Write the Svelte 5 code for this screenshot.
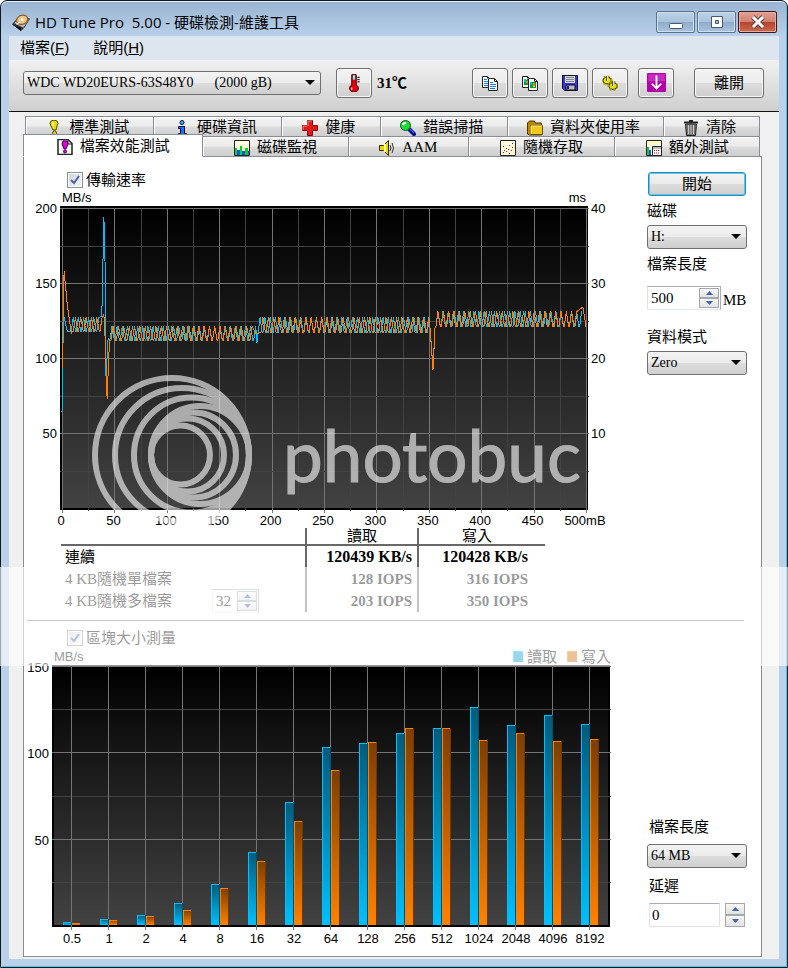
<script lang="ts">
	type Tab = { icon: string; name: string; size: number; active?: boolean };

	const backTabs: Tab[] = [
		{ icon: "bulb", name: "標準測試", size: 129 },
		{ icon: "info", name: "硬碟資訊", size: 128 },
		{ icon: "cross", name: "健康", size: 98 },
		{ icon: "search", name: "錯誤掃描", size: 128 },
		{ icon: "folder", name: "資料夾使用率", size: 158 },
		{ icon: "trash", name: "清除", size: 95 },
	];
	const frontTabs: Tab[] = [
		{ icon: "note", name: "檔案效能測試", size: 180, active: true },
		{ icon: "bars", name: "磁碟監視", size: 146 },
		{ icon: "speaker", name: "AAM", size: 120 },
		{ icon: "scatter", name: "隨機存取", size: 147 },
		{ icon: "extra", name: "額外測試", size: 145 },
	];
	const tools = [
		{ icon: "copy", name: "Copy text" },
		{ icon: "copyImage", name: "Copy image" },
		{ icon: "save", name: "Save" },
		{ icon: "gears", name: "Options" },
	];

	const results = [
		{ read: "128 IOPS", write: "316 IOPS", name: "4 KB隨機單檔案" },
		{ read: "203 IOPS", write: "350 IOPS", name: "4 KB隨機多檔案" },
	];

	const blocks = [
		{ size: "0.5", read: 1.7, write: 1.2 },
		{ size: "1", read: 3.5, write: 2.9 },
		{ size: "2", read: 5.8, write: 5.2 },
		{ size: "4", read: 12.7, write: 8.7 },
		{ size: "8", read: 23.7, write: 21.4 },
		{ size: "16", read: 42.3, write: 37.1 },
		{ size: "32", read: 71.2, write: 60.2 },
		{ size: "64", read: 103.1, write: 89.8 },
		{ size: "128", read: 105.4, write: 106 },
		{ size: "256", read: 111.2, write: 114.1 },
		{ size: "512", read: 114.1, write: 114.1 },
		{ size: "1024", read: 126.3, write: 107.1 },
		{ size: "2048", read: 115.8, write: 111.2 },
		{ size: "4096", read: 121.6, write: 106.6 },
		{ size: "8192", read: 116.4, write: 107.7 },
	];

	// transfer chart: 500 MB over 524 units, 200 MB/s over 300 units
	const px = (mb: number) => 38 + mb * 1.048;
	const py = (speed: number) => 302 - speed * 1.5;
	// block chart: 150 MB/s over 259 units
	const by = (speed: number) => Math.round(260 - (speed * 259) / 150);

	// saw wave between two speeds
	function wave(from: number, to: number, low: number, high: number, period: number) {
		const points: number[][] = [];
		for (let x = from; x < to; x += period) {
			points.push([x, low], [x + period * 0.15, low], [x + period * 0.55, high]);
		}
		return points;
	}

	const line = (points: number[][]) =>
		points.map(([x, y]) => `${px(x).toFixed(1)},${py(y).toFixed(1)}`).join(" ");

	const readLine = line([
		[0, 64], [1, 110], [2, 127], [5, 118],
		...wave(8, 36, 118, 127, 4.9),
		[38, 128], [40, 194], [41, 165], [42, 88], [44, 113],
		...wave(45, 184, 112, 121, 4.9),
		[186, 110], [189, 127],
		...wave(191, 348, 117, 127, 4.9),
		[351, 122], [354, 93],
		...wave(356, 496, 121, 131, 4.9),
	]);
	const writeLine = line([
		[0, 93], [2, 158], [5, 136], [9, 116],
		...wave(10, 36, 118, 127, 5.1),
		[40, 129], [41, 115], [43, 73], [45, 107],
		...wave(46, 182, 112, 121, 5.1),
		[185, 116],
		...wave(189, 348, 117, 127, 5.1),
		[351, 122], [354, 92],
		...wave(356, 491, 121, 131, 5.1),
		[497, 134], [500, 121],
	]);

	// left edge, right edge of every ring in the watermark
	const rings = [
		[68, 228], [88, 228], [107, 228], [124, 228], [124, 215], [124, 203], [124, 189],
	];
</script>

{#snippet icon(name: string, size: number = 16)}
	<svg class="icon" width={size} height={size} viewBox="0 0 16 16" aria-hidden="true">
		{#if name === "drive"}
			<path d="M0 10 7 2l9 3-5 8-3 3z" fill="#333" />
			<path d="M2 9 7 3l8 3-5 7z" fill="#b9b5ac" />
			<ellipse cx="9" cy="6" rx="5" ry="4" fill="#e8c68c" stroke="#8a5c20" transform="rotate(-20 9 6)" />
			<circle cx="9" cy="6" r="1.2" fill="#fff" />
			<path d="m0 10 8 3v3z" fill="#111" />
			<path d="m4 10 3-2" stroke="#eee" />
		{:else if name === "thermo"}
			<path d="M6 1q2-2 4 0v9q2 1 2 3-1 3-4 3t-4-3q0-2 2-3z" fill="#e00010" stroke="#600" />
			<path d="M7 1h2v4H7z" fill="#5ff" />
			<path d="M6 12v2" stroke="#fff" />
			<path d="M11 3h2M11 5h2M11 7h2" stroke="#222" />
		{:else if name === "copy" || name === "copyImage"}
			<path d="M.5 1.500h5l3 3v8h-8z" fill="#fff" stroke="#222" />
			<path d="M6.500 3.500h6l3 3v9h-9z" fill="#fff" stroke="#222" />
			<path d="M12.500 3.500v3h3M5.500 1.500v2" fill="none" stroke="#222" />
			{#if name === "copy"}
				<path d="M2 4.500h3M2 6.500h4M2 8.500h4M2 10.500h4M8 7.500h3M8 9.500h6M8 11.500h6M8 13.500h5" stroke="#1778e0" />
			{:else}
				<path d="M2 4h4v6H2zM8 7h6v6H8z" fill="#0a9c30" />
				<path d="M2 4h2v3H2zM8 7h2v3H8z" fill="#00b8e0" />
				<path d="M4 6h2v2H4zM11 8h2v3h-2z" fill="#f80" />
				<path d="M4 4h1v1H4zM11 11h2v1h-2z" fill="#ff0" />
			{/if}
		{:else if name === "save"}
			<path d="M.5.500h15v15h-13l-2-2z" fill="#3434e8" stroke="#111" />
			<path d="M3 1h10v7H3z" fill="#d8d8d8" />
			<path d="M4 2.500h8M4 4.500h8M4 6.500h8" stroke="#888" />
			<path d="M4 10h9v5H4z" fill="#bbb" stroke="#111" />
			<path d="M5 11h2v3H5z" fill="#1818a0" />
		{:else if name === "gears"}
			<ellipse cx="5" cy="5.500" rx="4" ry="3.500" fill="#e8e000" stroke="#222" />
			<ellipse cx="5" cy="5.500" rx="4.500" ry="4" fill="none" stroke="#a89c00" stroke-width="2" stroke-dasharray="2 2" />
			<ellipse cx="11" cy="11" rx="4" ry="3.500" fill="#e8e000" stroke="#222" />
			<ellipse cx="11" cy="11" rx="4.500" ry="4" fill="none" stroke="#a89c00" stroke-width="2" stroke-dasharray="2 2" />
			<path d="M5 1v5M11 6v5" stroke="#555" stroke-width="2" />
			<path d="M5.500 1v5M11.500 6v5" stroke="#ddd" />
		{:else if name === "download"}
			<rect width="16" height="16" rx="1" fill="#b000a8" />
			<path d="M1 1h14v6H1z" fill="#d848d0" opacity=".6" />
			<path d="M8 2v11M4 9l4 4 4-4" fill="none" stroke="#fff" stroke-width="1.600" />
		{:else if name === "bulb"}
			<path d="M5 1q3-2 6 0 2 3 0 5l-1 4H7L5 6Q3 3 5 1z" fill="#e8e000" stroke="#554c00" />
			<path d="M7 2v4" stroke="#fff" />
			<circle cx="8.500" cy="13" r="2" fill="#e8e000" stroke="#554c00" />
		{:else if name === "info"}
			<circle cx="8" cy="2.500" r="2" fill="#28c0ff" stroke="#003" />
			<path d="M4.500 6.500h6v7h2v2h-8v-2h2v-5h-2z" fill="#1078ff" stroke="#003" />
		{:else if name === "cross"}
			<path d="M5.500.500h5v5h5v5h-5v5h-5v-5h-5v-5h5z" fill="#e01818" stroke="#800" />
			<path d="M6 6V1h4M1 10V6h4" fill="none" stroke="#ff8a80" />
		{:else if name === "search"}
			<path d="m9 9 5 5" stroke="#001080" stroke-width="4" stroke-linecap="round" />
			<path d="m10 9 4 4" stroke="#2858ff" stroke-width="1.500" />
			<circle cx="5.500" cy="5.500" r="5" fill="#20d838" stroke="#066018" />
			<path d="M3 5q0-2 3-2" fill="none" stroke="#fff" stroke-width="2" />
		{:else if name === "folder"}
			<path d="M.5 14V3l2-2h5l1 2h6v12h-12z" fill="#b88800" stroke="#4a3600" />
			<path d="M3.500 5.500h12v9h-12z" fill="#f0c820" stroke="#6a4e00" />
			<path d="M4 6h11M4 6v8" stroke="#fff090" />
		{:else if name === "trash"}
			<path d="M1 2.500h14M6 1h4" stroke="#222" stroke-width="2" />
			<path d="M2.500 4h11l-1 11.500h-9z" fill="#707070" stroke="#222" />
			<path d="M5.500 5v9M8 5v9M10.500 5v9" stroke="#ccc" />
		{:else if name === "note"}
			<path d="M1 .500h10l4 4v11H1z" fill="#fff" stroke="#222" stroke-width="1.500" />
			<path d="M11 1v4h4" fill="none" stroke="#222" />
			<path d="M6 2h4l1 3-2 5H7L5 5z" fill="#e000e0" stroke="#400040" />
			<circle cx="8" cy="12.500" r="1.500" fill="#e000e0" stroke="#400040" />
		{:else if name === "bars"}
			<path d="M.5.500h15v15H.500z" fill="#fffbe0" stroke="#222" />
			<path d="M1 8h2v7H1zM6 6h2v9H6zM11 8h3v7h-3z" fill="#00d820" />
			<path d="M3 10h3v5H3zM8 11h3v4H8zM14 11h1v4h-1z" fill="#2048ff" />
		{:else if name === "speaker"}
			<path d="M.5 5.500h4l5-5v15l-5-5h-4z" fill="#e8d800" stroke="#332c00" />
			<path d="M6 4v8" stroke="#fff8a0" stroke-width="2" />
			<path d="M11 5q2 3 0 6M13 3q3 5 0 10" fill="none" stroke="#333" />
		{:else if name === "scatter"}
			<path d="M.5.500h15v15H.500z" fill="#fffbd8" stroke="#222" />
			<path d="M3 6h1v1H3zM6 8h1v1H6zM9 5h1v1H9zM12 3h1v1h-1zM4 10h1v1H4z" fill="#22f" />
			<path d="M3 12h1v1H3zM6 11h1v1H6zM8 9h1v1H8zM11 10h1v1h-1zM12 7h1v1h-1zM9 13h1v1H9z" fill="#e00" />
		{:else if name === "extra"}
			<path d="M.5.500h15v15H.500z" fill="#fff" stroke="#222" />
			<path d="M1 1h14v4H1z" fill="#fff8c0" />
			<path d="M1 7h2v8H1z" fill="#00d820" /><path d="M3 10h2v5H3z" fill="#2048ff" />
			<path d="M6.500 6.500h9v9h-9z" fill="#fff" stroke="#222" />
			<path d="M7 7h8v2H7z" fill="#bbb" />
			<path d="M8 10.500h6M8 13h6" stroke="#e00" stroke-dasharray="1 1" />
		{/if}
	</svg>
{/snippet}

{#snippet tab(t: Tab)}
	<button class="tab" class:active={t.active} role="tab" aria-selected={!!t.active} style:flex-grow={t.size}>
		{@render icon(t.icon)}
		<span>{t.name}</span>
	</button>
{/snippet}

{#snippet arrows()}
	<span class="arrows">
		<button aria-label="Up"><svg viewBox="0 0 7 4"><path d="M0 4 3.500 0 7 4z" /></svg></button>
		<button aria-label="Down"><svg viewBox="0 0 7 4"><path d="M0 0h7L3.500 4z" /></svg></button>
	</span>
{/snippet}

<div class="window">
	<header class="title-bar">
		{@render icon("drive", 18)}
		<h1>HD Tune Pro&nbsp; 5.00 - 硬碟檢測-維護工具</h1>
		<div class="window-buttons">
			<button aria-label="Minimize">
				<svg width="14" height="16"><rect x=".5" y="9.500" width="13" height="5" rx="1" fill="#fff" stroke="#4d5a6b" /></svg>
			</button>
			<button aria-label="Maximize">
				<svg width="14" height="16"><path d="M1.500 2.500h11v11h-11z" fill="#fff" stroke="#4d5a6b" /><path d="M5.500 6.500h3v3h-3z" fill="#9db9d8" stroke="#4d5a6b" /></svg>
			</button>
			<button class="close" aria-label="Close">
				<svg width="14" height="16"><path d="m2 3 10 10M12 3 2 13" stroke="#5b4248" stroke-width="5" /><path d="m3 4 8 8M11 4l-8 8" stroke="#fff" stroke-width="3" stroke-linecap="square" /></svg>
			</button>
		</div>
	</header>

	<nav class="menu">
		<button>檔案(<u>F</u>)</button>
		<button>說明(<u>H</u>)</button>
	</nav>

	<div class="toolbar">
		<select class="drive" aria-label="Drive">
			<option>WDC WD20EURS-63S48Y0 &nbsp; &nbsp;&nbsp; (2000 gB)</option>
		</select>
		<button class="tool" aria-label="Temperature">{@render icon("thermo", 18)}</button>
		<strong class="temperature">31℃</strong>
		<div class="tools">
			{#each tools as tool}
				<button class="tool" aria-label={tool.name}>{@render icon(tool.icon)}</button>
			{/each}
		</div>
		<button class="tool" aria-label="Download">{@render icon("download", 19)}</button>
		<button class="tool exit">離開</button>
	</div>

	<main>
		<div role="tablist">
			<div class="tabs back">
				{#each backTabs as t}{@render tab(t)}{/each}
			</div>
			<div class="tabs front">
				{#each frontTabs as t}{@render tab(t)}{/each}
			</div>
		</div>

		<div class="panel" role="tabpanel">
			<section>
				<div class="charts">
					<label class="check"><input type="checkbox" checked />傳輸速率</label>
					<div class="units transfer-units"><span>MB/s</span><span>ms</span></div>
					<svg class="chart" viewBox="0 0 600 322">
						<defs>
							<linearGradient id="plot" x2="0" y2="1">
								<stop stop-color="#000" /><stop offset="1" stop-color="#424242" />
							</linearGradient>
							<linearGradient id="read" x2="0" y2="1">
								<stop stop-color="#005b7c" /><stop offset="1" stop-color="#00c0ff" />
							</linearGradient>
							<linearGradient id="write" x2="0" y2="1">
								<stop stop-color="#7c3e00" /><stop offset="1" stop-color="#ff8200" />
							</linearGradient>
						</defs>
						<g shape-rendering="crispEdges">
							<rect x="36" width="528" height="304" />
							<rect x="38" y="2" width="524" height="300" fill="url(#plot)" />
							{#each Array(21) as _, i}
								<path d="M{Math.round(px(i * 25))}.500 2v{i % 2 ? 303 : 305}" class={i % 2 ? "minor" : "major"} />
							{/each}
							{#each Array(8) as _, i}
								<path d="M36 {Math.round(py(200 - i * 25))}.500H565" class={i % 2 ? "minor" : "major"} />
							{/each}
							<polyline points={readLine} stroke="#00bfff" />
							<polyline points={writeLine} stroke="#ff8000" />
						</g>
						{#each [200, 150, 100, 50] as speed}
							<text x="33" y={py(speed) + 5} text-anchor="end">{speed}</text>
							<text x="567" y={py(speed) + 5}>{speed / 5}</text>
						{/each}
						{#each Array(11) as _, i}
							<text x={px(i * 50) - 1} y="319" text-anchor="middle">{i * 50}{i === 10 ? "mB" : ""}</text>
						{/each}
						<g class="watermark">
							{#each rings as [left, right]}
								<circle cx={(left + right) / 2} cy="249" r={(right - left) / 2 - 3} />
							{/each}
							<text x="259" y="276">photobuc</text>
						</g>
					</svg>
					<table>
						<thead>
							<tr><td></td><th>讀取</th><th>寫入</th></tr>
						</thead>
						<tbody>
							<tr class="total"><th>連續</th><td>120439 KB/s</td><td>120428 KB/s</td></tr>
							{#each results as row, i}
								<tr>
									<th>
										<div class="row-name">
											<label for={i ? "threads" : undefined}>{row.name}</label>
											{#if i === 1}
												<span class="spinner small">
													<input id="threads" type="number" value="32" />
													{@render arrows()}
												</span>
											{/if}
										</div>
									</th>
									<td>{row.read}</td>
									<td>{row.write}</td>
								</tr>
							{/each}
						</tbody>
					</table>
				</div>
				<aside>
					<button class="start">開始</button>
					<label for="disk">磁碟</label>
					<select id="disk"><option>H:</option></select>
					<label for="length">檔案長度</label>
					<div class="amount">
						<span class="spinner">
							<input id="length" type="number" value="500" />
							{@render arrows()}
						</span>
						<span>MB</span>
					</div>
					<label for="pattern">資料模式</label>
					<select id="pattern"><option>Zero</option></select>
				</aside>
			</section>

			<hr />

			<section>
				<div class="charts">
					<label class="check block-check"><input type="checkbox" checked />區塊大小測量</label>
					<div class="units block-units">
						<span>MB/s</span>
						<span class="legend"><i class="read"></i>讀取<i class="write"></i>寫入</span>
					</div>
					<svg class="chart" viewBox="0 0 600 285">
						<g shape-rendering="crispEdges">
							<rect x="28" width="558" height="262" />
							<rect x="30" y="2" width="554" height="258" fill="url(#plot)" />
							{#each [150, 125, 100, 75, 50, 25] as speed}
								<path d="M28 {by(speed)}.500H587" class={speed % 50 ? "minor" : "major"} />
							{/each}
							{#each blocks as block, i}
								<path d="M{47 + i * 37}.500 2v263" class="major" />
								<g transform="translate({39 + i * 37} 0)">
									<rect y={by(block.read)} width="9" height={260 - by(block.read)} fill="url(#read)" />
									<path d="M.500 260V{by(block.read)}.500H8" stroke="#00bfff" />
									<path d="M8.500 260V{by(block.read)}" stroke="#005070" />
									<rect x="9" y={by(block.write)} width="9" height={260 - by(block.write)} fill="url(#write)" />
									<path d="M9.500 260V{by(block.write)}.500H17" stroke="#ff8000" />
									<path d="M17.500 260V{by(block.write)}" stroke="#703800" />
								</g>
							{/each}
						</g>
						{#each [150, 100, 50] as speed}
							<text x="25" y={by(speed) + 6} text-anchor="end">{speed}</text>
						{/each}
						{#each blocks as block, i}
							<text x={48 + i * 37} y="278" text-anchor="middle">{block.size}</text>
						{/each}
					</svg>
				</div>
				<aside class="bottom">
					<label for="block-length">檔案長度</label>
					<select id="block-length"><option>64 MB</option></select>
					<label for="delay">延遲</label>
					<div class="delay">
						<input id="delay" type="number" value="0" />
						{@render arrows()}
					</div>
				</aside>
			</section>
		</div>
	</main>
	<div class="haze"></div>
</div>

<style>
	:global(body) {
		background: #fff;
	}

	.window {
		--serif: "Liberation Serif", "Noto Sans CJK TC", serif;
		--sans: "Liberation Sans", "Noto Sans CJK TC", sans-serif;
		--face: linear-gradient(#f3f3f3, #ebebeb 49%, #dddddd 50%, #cfcfcf);
		position: relative;
		box-sizing: border-box;
		display: flex;
		flex-direction: column;
		min-height: 100vh;
		padding: 1px 8px 8px;
		border: 1px solid #15181d;
		border-radius: 7px 7px 0 0;
		background: linear-gradient(#99b4d1, #b9d1ea 36px);
		box-shadow: inset -1px -1px #35cdf0, inset 0 1px #e4eef8;
		color: #000;
		font: 15px/20px var(--serif);
	}

	button,
	select,
	input {
		box-sizing: border-box;
		margin: 0;
		padding: 0;
		color: inherit;
		font: inherit;
	}

	.icon {
		flex: none;
	}

	.title-bar {
		display: flex;
		align-items: center;
		gap: 5px;
		height: 28px;
		padding: 6px 2px 0 3px;
	}
	h1 {
		margin: 0;
		font: 15px/20px "Open Sans", "Noto Sans CJK TC", sans-serif;
	}
	.window-buttons {
		display: flex;
		gap: 2px;
		margin-left: auto;
	}
	.window-buttons button {
		display: flex;
		align-items: center;
		justify-content: center;
		width: 39px;
		height: 22px;
		border: 1px solid #5a7391;
		border-radius: 2px;
		background: linear-gradient(#bfd2e7, #a9c2dd 49%, #8eabcb 50%, #a9c4e0);
		box-shadow: inset 0 0 0 1px #cfdeed;
	}
	.window-buttons .close {
		border-color: #4a1420;
		background: linear-gradient(#e3a195, #d2806f 49%, #b5432b 50%, #cc6a52);
		box-shadow: inset 0 0 0 1px #e4ac9e;
	}

	.menu {
		display: flex;
		gap: 24px;
		height: 24px;
		padding-left: 11px;
		background: #dde5ee;
		font-family: var(--sans);
	}
	.menu button {
		border: 0;
		background: none;
	}

	.toolbar {
		display: flex;
		align-items: center;
		height: 52px;
		box-sizing: border-box;
		padding: 0 15px 6px 14px;
		background: linear-gradient(#f1f1f1, #cfcfcf);
		border-bottom: 1px solid #111;
	}
	select {
		appearance: none;
		width: 100%;
		height: 24px;
		padding: 0 24px 0 3px;
		border: 1px solid #707070;
		border-radius: 3px;
		background:
			url('data:image/svg+xml;charset=UTF-8,<svg width="10" height="6" xmlns="http://www.w3.org/2000/svg"><path d="M0 0h10L5 5z" /></svg>')
				no-repeat right 5px center,
			var(--face);
		font-size: 14px;
	}
	.drive {
		flex: 0 1 298px;
		margin-right: 15px;
	}
	.tool {
		display: flex;
		align-items: center;
		justify-content: center;
		flex: none;
		width: 36px;
		height: 30px;
		border: 1px solid #707070;
		border-radius: 3px;
		background: var(--face);
		box-shadow: inset 0 0 0 1px #f8f8f8;
	}
	.temperature {
		margin: 0 auto 0 5px;
		white-space: nowrap;
	}
	.tools {
		display: flex;
		gap: 4px;
		margin-right: 10px;
	}
	.exit {
		width: 70px;
		margin-left: 20px;
	}

	main {
		display: flex;
		flex: 1;
		flex-direction: column;
		padding: 4px 17px 2px 14px;
		background: #f0f0f0;
	}
	.tabs {
		display: flex;
		height: 20px;
	}
	.back {
		padding: 0 2px;
	}
	.front {
		position: relative;
		align-items: flex-end;
		height: 21px;
		padding-right: 2px;
		margin-bottom: -1px;
	}
	.tab {
		display: flex;
		flex: 1 1 0;
		align-items: center;
		justify-content: center;
		gap: 7px;
		height: 21px;
		padding-top: 2px;
		border: 1px solid #8a8c95;
		border-left-width: 0;
		background: linear-gradient(#f2f2f2, #ececec 48%, #dcdcdc 52%, #cecece);
		box-shadow: inset 1px 1px #fff;
		line-height: 17px;
		white-space: nowrap;
	}
	.back .tab {
		padding-right: 4px;
	}
	.back .tab:first-child {
		border-left-width: 1px;
	}
	.tab.active {
		height: 23px;
		border-left-width: 1px;
		border-bottom-color: #fff;
		background: #fff;
	}

	.panel {
		flex: 1;
		border: 1px solid #8a8c95;
		background: #fff;
	}
	section {
		display: flex;
	}
	.charts {
		flex: 1;
		min-width: 0;
	}
	.check {
		display: flex;
		align-items: center;
		gap: 3px;
		width: max-content;
		padding: 13px 0 0 43px;
	}
	.block-check {
		padding-top: 7px;
	}
	.check input {
		appearance: none;
		width: 16px;
		height: 16px;
		border: 1px solid #8e8f8f;
		background:
			url('data:image/svg+xml;charset=UTF-8,<svg width="10" height="10" xmlns="http://www.w3.org/2000/svg"><path d="M1 5l3 3 5-7" fill="none" stroke="%234b62a6" stroke-width="2" /></svg>')
				no-repeat center,
			linear-gradient(135deg, #cfd3da, #f6f6f6);
		box-shadow: inset 0 0 0 1px #fff;
	}
	.units {
		display: flex;
		align-items: center;
		justify-content: space-between;
		font: 13px/16px var(--sans);
	}
	.transfer-units {
		padding: 0 38px;
	}
	.block-units {
		height: 17px;
		padding: 0 13px 0 30px;
	}
	.legend {
		display: flex;
		align-items: center;
		gap: 4px;
		font: 15px/16px var(--serif);
	}
	.legend i {
		width: 9px;
		height: 10px;
		border: 1px solid #00bfff;
		border-width: 1px 0 0 1px;
		background: #009fd0;
	}
	.legend .write {
		margin-left: 6px;
		border-color: #ff8000;
		background: #d06a00;
	}

	.chart {
		display: block;
		width: 100%;
		overflow: visible;
		font: 13px var(--sans);
	}
	.chart path,
	.chart polyline {
		fill: none;
	}
	.major {
		stroke: #747474;
	}
	.minor {
		stroke: #424242;
	}
	.watermark {
		opacity: 0.6;
		fill: #fff;
		stroke: #fff;
		font: 71px Lato, sans-serif;
	}
	.watermark circle {
		fill: none;
		stroke-width: 6;
	}

	table {
		width: 484px;
		margin-left: 37px;
		border-collapse: collapse;
		table-layout: fixed;
	}
	th,
	td {
		box-sizing: border-box;
		height: 22px;
		padding: 0;
		line-height: 22px;
	}
	tr > :nth-child(1) {
		width: 245px;
		padding-left: 4px;
		text-align: left;
	}
	tr > :nth-child(2) {
		width: 112px;
	}
	tr > :nth-child(n + 2) {
		border-left: 2px solid #686868;
	}
	thead tr > * {
		height: 16px;
		border-bottom: 2px solid #686868;
		line-height: 16px;
	}
	th {
		font-weight: normal;
	}
	thead th:last-child {
		padding-right: 10px;
	}
	tbody td {
		padding-right: 5px;
		font-weight: bold;
		text-align: right;
	}
	tbody td:last-child {
		padding-right: 17px;
	}
	.total td {
		font-size: 16px;
	}
	.row-name {
		display: flex;
		align-items: center;
		justify-content: space-between;
		height: 22px;
		padding-right: 46px;
	}

	hr {
		height: 1px;
		margin: 8px 17px 0 3px;
		border: 0;
		background: #707070;
	}

	.spinner {
		display: inline-flex;
		width: 74px;
		height: 24px;
		box-sizing: border-box;
		padding: 1px;
		border: 1px solid #abadb3;
		border-color: #abadb3 #abadb3 #e3e9ef #e2e3ea;
		background: #fff;
	}
	.small {
		width: 47px;
	}
	input[type="number"] {
		appearance: textfield;
		flex: 1;
		width: 0;
		min-width: 0;
		padding-left: 2px;
		border: 0;
		outline: 0;
		background: #fff;
	}
	input::-webkit-inner-spin-button {
		display: none;
	}
	.arrows {
		display: flex;
		flex: none;
		flex-direction: column;
		width: 20px;
	}
	.arrows button {
		display: flex;
		flex: 1;
		align-items: center;
		justify-content: center;
		border: 1px solid #a5a7b0;
		background: linear-gradient(#f8f8f8, #e2e2e2);
	}
	.arrows svg {
		width: 7px;
		height: 4px;
		fill: #4460b4;
	}

	aside {
		box-sizing: border-box;
		display: flex;
		flex: 0 0 137px;
		flex-direction: column;
		padding: 15px 14px 0 23px;
	}
	aside label {
		margin: 5px 0 4px;
	}
	.start {
		height: 24px;
		margin: 0 1px;
		border: 1px solid #3c7fb1;
		border-radius: 3px;
		background: var(--face);
		box-shadow: inset 0 0 0 1px #48d1f4;
	}
	.amount {
		display: flex;
		align-items: flex-end;
		gap: 2px;
		margin: 8px 0 12px;
	}
	.bottom {
		justify-content: flex-end;
		padding-bottom: 23px;
	}
	.bottom label {
		margin: 8px 2px 7px;
	}
	.delay {
		display: flex;
		gap: 5px;
		padding: 0 2px;
		height: 24px;
	}
	.delay input[type="number"] {
		border: 1px solid #e2e3ea;
		border-top-color: #abadb3;
	}

	/* translucent band lying across the whole window */
	.haze {
		position: absolute;
		top: 566px;
		left: -1px;
		right: -1px;
		height: 99px;
		background: #fff;
		opacity: 0.6;
		pointer-events: none;
	}
</style>
